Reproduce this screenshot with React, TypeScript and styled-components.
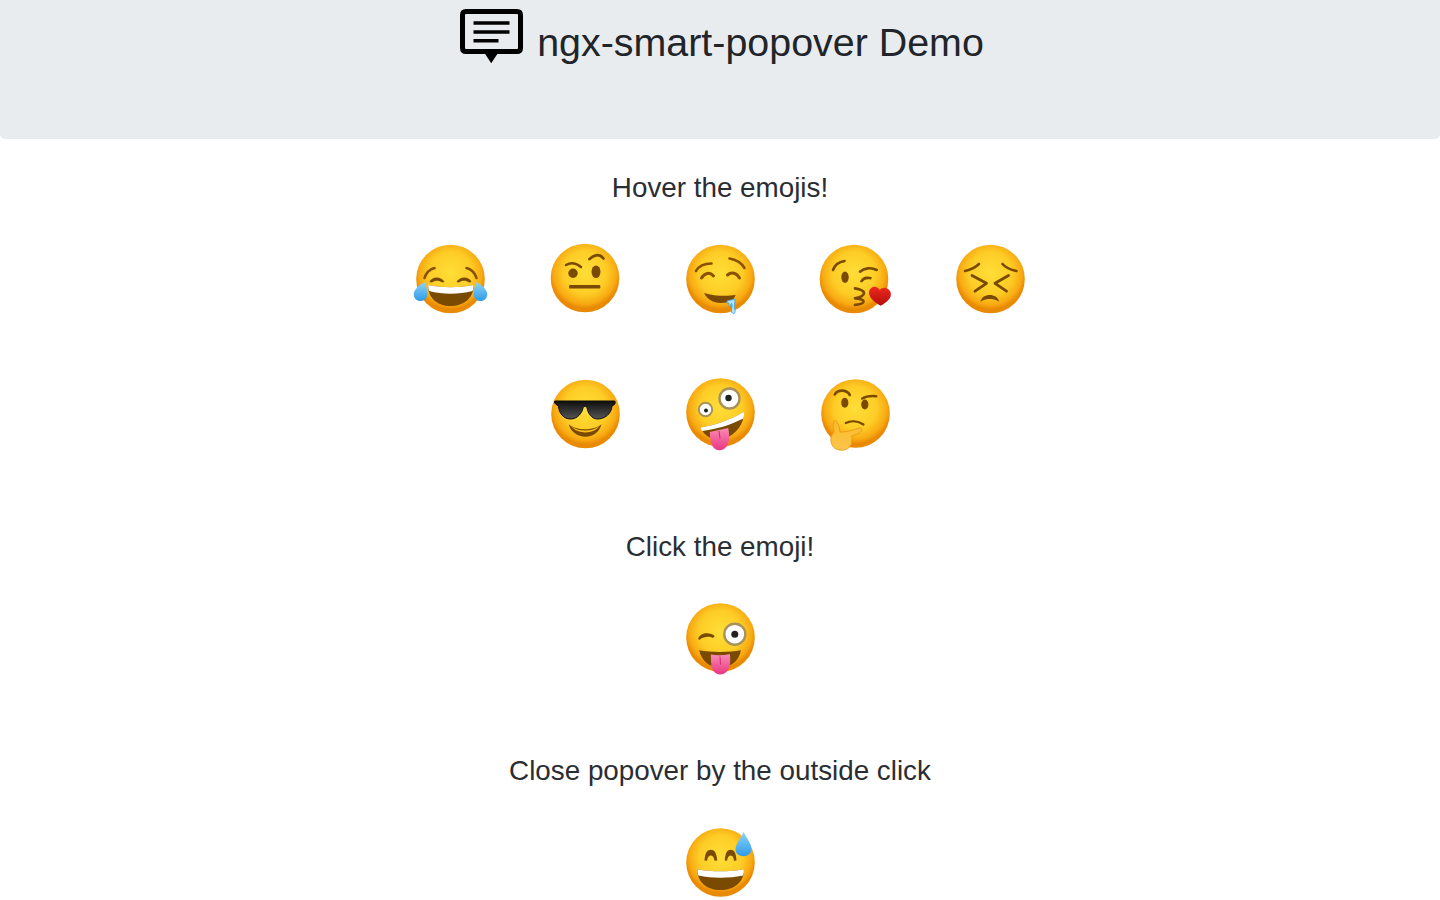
import React from "react";
import styled, { createGlobalStyle } from "styled-components";

const Global = createGlobalStyle`
  html, body { margin: 0; padding: 0; background: #fff; }
  body { font-family: "Liberation Sans", Arial, sans-serif; color: #212529; overflow: hidden; height: 900px; }
`;
const Page = styled.div`display: flex; flex-direction: column; align-items: center; height: 900px; overflow: hidden;`;
const Jumbotron = styled.header`
  align-self: stretch; flex: none; height: 138.5px; background: #e9ecef; border-radius: 0 0 5px 5px;
  display: flex; justify-content: center; align-items: flex-start; padding-left: 4px; box-sizing: border-box; margin-bottom: 30.5px;
`;
const Title = styled.h1`
  margin: 18px 0 0 13px; font-size: 39.4px; line-height: 48px; font-weight: 500; color: #212529; white-space: nowrap;
`;
const LogoSvg = styled.svg`display: block; margin-top: 9px; flex: none;`;
const Lead = styled.p<{ $after?: number }>`
  margin: 0; font-size: 27.8px; font-weight: 300; line-height: 38px; text-align: center;
  height: 38px; margin-bottom: ${p => p.$after ?? 0}px; white-space: nowrap; color: #2a2e33;
`;
const EmojiGrid = styled.div`
  display: flex; flex-wrap: wrap; justify-content: center; width: 675px;
`;
const Cell = styled.div`width: 135px; height: 135px; display: flex; align-items: center; justify-content: center;`;
const Section = styled.section<{ $after: number }>`display: flex; flex: none; flex-direction: column; align-items: center; margin-bottom: ${p => p.$after}px;`;

const BROWN = "#7a4a00";
const DARK = "#8a5200";
const Svg = styled.svg`display: block; overflow: visible; flex: none;`;
const E: React.FC<{ dx?: number; dy?: number; children: React.ReactNode }> = ({ dx = 0, dy = 0, children }) => (
  <Svg width="72" height="72" viewBox="0 0 72 72" style={{ transform: `translate(${dx}px, ${dy}px)` }}>
    <circle cx="36" cy="36" r="34.300" fill="url(#face)" />
    {children}
  </Svg>
);

const Joy = () => (
  <E dx={0.5} dy={0}>
    <path d="M10 35C11.500 30 15 26.500 20 25" stroke={DARK} strokeWidth="2.600" fill="none" strokeLinecap="round" />
    <path d="M62 35C60.500 30 57 26.500 52 25" stroke={DARK} strokeWidth="2.600" fill="none" strokeLinecap="round" />
    <path d="M15 39C17 33 27 33 30 39L27.500 39.500C25 37 20 37 17.500 39.500Z" fill={BROWN} />
    <path d="M42 39C45 33 55 33 57 39L54.500 39.500C52 37 47 37 44.500 39.500Z" fill={BROWN} />
    <path d="M13.700 42C27 45 45 45 59 42C59.500 55 49 63 36 63C23 63 13.200 55 13.700 42Z" fill={BROWN} />
    <path d="M13.700 42C27 45 45 45 59 42C59 44.500 58.700 46.500 58 48C44 51.500 28 51.500 14.700 48C14 46.500 13.700 44.500 13.700 42Z" fill="#fff" />
    <path d="M11 39C11.500 44 12.800 47 12.800 51C12.800 55.500 9.500 58 6 58C2.500 58 -0.800 55.500 -0.800 51C-0.800 47 5 41 11 39Z" fill="url(#tear)" />
    <path d="M61 39C60.500 44 59.200 47 59.200 51C59.200 55.500 62.500 58 66 58C69.500 58 72.800 55.500 72.800 51C72.800 47 67 41 61 39Z" fill="url(#tear)" />
  </E>
);
const Raised = () => (
  <E dx={0} dy={-1}>
    <path d="M17 23C22 20 27 21 32 25" stroke={BROWN} strokeWidth="2.600" fill="none" strokeLinecap="round" />
    <path d="M40.500 17C44 14 50 10.500 54.500 16.500" stroke={BROWN} strokeWidth="2.800" fill="none" strokeLinecap="round" />
    <circle cx="24" cy="31.300" r="4.700" fill={BROWN} />
    <ellipse cx="47" cy="29.700" rx="4.500" ry="6.300" fill={BROWN} />
    <rect x="20" y="43" width="31.300" height="3.600" rx="1.200" fill={BROWN} />
  </E>
);
const Drool = () => (
  <E dx={0.5} dy={0}>
    <path d="M11.500 28C14 23.500 20 20.500 27 20.500" stroke={DARK} strokeWidth="2.600" fill="none" strokeLinecap="round" />
    <path d="M60 25C57 20 51 16.500 45 15.500" stroke={DARK} strokeWidth="2.600" fill="none" strokeLinecap="round" />
    <path d="M17 35C20 30 25 28.500 29 33" stroke={DARK} strokeWidth="3" fill="none" strokeLinecap="round" />
    <path d="M43 32C47 28.500 52 30 55 35" stroke={DARK} strokeWidth="3" fill="none" strokeLinecap="round" />
    <path d="M19.700 50C29 53 42 53.500 51 52C50 57 44 60 36 60C29 60 22 56 19.700 50Z" fill={BROWN} />
    <path d="M42.500 58C44.500 57 48 57 50.500 56C50.500 60 49.500 63 50 65.500C51 67.500 51 70 49.200 70.500C47 70.500 46.800 68.500 47.200 66C47.500 63.500 47.700 61 47.200 60.500C46.200 60.500 46 62 45.800 64C44.500 64 44.300 61.500 44.500 60L42.500 60Z" fill="#b6e3f8" stroke="#3aa5e8" strokeWidth=".9" />
  </E>
);
const Kiss = () => (
  <E dx={-1} dy={0}>
    <path d="M15 27C16.500 22.500 20 19 26.500 18" stroke={BROWN} strokeWidth="2.600" fill="none" strokeLinecap="round" />
    <ellipse cx="27" cy="34.300" rx="3.700" ry="5.700" fill={BROWN} />
    <path d="M42 28.700C46 25 53 24 58.700 27" stroke={BROWN} strokeWidth="2.600" fill="none" strokeLinecap="round" />
    <path d="M42 39C43 34 49 32 54 34.500L53 36.500C49 35.500 46 36.500 44 39.500Z" fill={BROWN} />
    <path d="M37 45.300C41 46 46 47.500 46 50C46 52.500 41 54.500 37 55.300C41 55.500 45.500 56.500 45.500 58.500C45.500 60.500 41 61.500 37 61.800" stroke={BROWN} strokeWidth="2.700" fill="none" strokeLinecap="round" strokeLinejoin="round" />
    <path d="M62.500 62.700C55 58.500 51 54 51 49.500C51 46 54 43.500 57 43.700C59.500 44 61 45.500 61.800 47C63 45.500 65.500 44.500 68 45C71.500 46 73.500 49.500 72.800 52.500C72 56.500 68 60 62.500 62.700Z" fill="url(#heart)" />
  </E>
);
const Persevere = () => (
  <E dx={0.5} dy={0}>
    <path d="M10.500 28C15 27 21 24.500 24.500 21" stroke={BROWN} strokeWidth="2.600" fill="none" strokeLinecap="round" />
    <path d="M62 28C57 27 51 24.500 48 21" stroke={BROWN} strokeWidth="2.600" fill="none" strokeLinecap="round" />
    <path d="M17.500 32.500L32 40.300L20.500 48.200" stroke={BROWN} strokeWidth="2.800" fill="none" strokeLinecap="round" strokeLinejoin="round" />
    <path d="M54 32.500L40.500 40.300L52 48.200" stroke={BROWN} strokeWidth="2.800" fill="none" strokeLinecap="round" strokeLinejoin="round" />
    <path d="M26 58.700C27 54 31 52 35.300 52C39.500 52 43.500 54 44.700 58.700C41 56.500 38 56 35.300 56C32.500 56 29.500 56.500 26 58.700Z" fill={BROWN} />
  </E>
);
const Cool = () => (
  <E dx={0.5} dy={0}>
    <path d="M5.500 23H65C66 23 66 25 65 26.500L62.500 28C62 36 55 41 48 41C42 41 38.500 35 37.500 30C37 28 34 28 33.500 30C32.500 35 28 41 21 41C14 41 9.500 35 8.800 28L6 26C5 25 4.500 23 5.500 23Z" fill="url(#shades)" stroke="#0c0c0c" strokeWidth="1" />
    <path d="M19.300 46.300C27 53 44 53 52 46.300C50 54 44 58.700 36 58.700C28 58.700 21 54 19.300 46.300Z" fill={BROWN} />
    <path d="M21.500 48C29 54 42 54 50 48C44 56.500 28 56.500 21.500 48Z" fill="#f9bd22" />
  </E>
);
const Zany = () => (
  <E dx={0.5} dy={-1.5}>
    <circle cx="45" cy="22" r="10" fill="#fff" stroke="#a8925c" strokeWidth="2.400" />
    <circle cx="44" cy="21.500" r="3.200" fill="#222" />
    <circle cx="21" cy="33" r="6.700" fill="#fff" stroke="#a8925c" strokeWidth="2" />
    <circle cx="21.500" cy="34" r="2" fill="#222" />
    <path d="M16 51C30 49 47 43 59.300 35.300C60 47 52 58 40 62C29 65 20 60 16 51Z" fill={BROWN} />
    <path d="M16 51C30 49 47 43 59.300 35.300C59.800 37.500 59.500 40 58.800 42C46 48.500 31 53 17.500 54.500C16.800 53.500 16.300 52.300 16 51Z" fill="#fff" />
    <path d="M25.300 55.500L43.700 51.500C44.500 55 45 60 44.500 63C44 68 41 73.700 35 73.700C29 73.700 26.500 68 26 63C25.500 60 25.300 58 25.300 55.500Z" fill="url(#tongue)" />
    <path d="M34.500 54.500L35.500 62" stroke="#d12b70" strokeWidth="1" fill="none" />
  </E>
);
const Think = () => (
  <E dx={0.5} dy={-0.5}>
    <path d="M15.300 17C18 12 27 11.500 30.300 17.500" stroke={BROWN} strokeWidth="2.600" fill="none" strokeLinecap="round" />
    <path d="M42.700 21C46 19 51 18.200 56.700 18.700" stroke={BROWN} strokeWidth="2.600" fill="none" strokeLinecap="round" />
    <ellipse cx="25.300" cy="25.300" rx="3.600" ry="5" fill={BROWN} />
    <ellipse cx="45.300" cy="27" rx="3.600" ry="5" fill={BROWN} />
    <path d="M26.300 45.500C31 43 38 43 44 47" stroke={BROWN} strokeWidth="2.200" fill="none" strokeLinecap="round" />
    <path d="M16 43C18 44 20 49 20.500 54.500C26 55 34 52 40 50.500C43 50 43 54 40 55.500C37 57 33 58 31.500 59C33 60 33 62 32 63C32.500 65 32 67 30.800 68C30 70.500 27 72.700 22 72.700C15 72.700 11.300 68 11.300 62C11.300 58 13.500 56.500 14.500 54C14 50 13 47 14 44C14.500 43 15.300 42.700 16 43Z" fill="url(#hand)" stroke="#e8940f" strokeWidth=".8" />
  </E>
);
const Wink = () => (
  <E dx={0.5} dy={-1.5}>
    <circle cx="50.300" cy="32.700" r="10.500" fill="#fff" stroke="#a8925c" strokeWidth="2.400" />
    <circle cx="50.300" cy="32.700" r="3.500" fill="#222" />
    <path d="M13.700 37C16 31 25 30 30.300 34.500L28.500 36.500C25 34.500 19 35 15.500 38C14.500 38.500 13.500 38 13.700 37Z" fill={BROWN} />
    <path d="M14.700 48.700C26 51 45 51 56.300 48.700C55.500 56 50 62 45 64L26 64C20 61 16 55 14.700 48.700Z" fill={BROWN} />
    <path d="M26.300 53C32 54 39 54 45.300 52.500C46 57 46 62 45 65C43.500 70 40 73 35.500 73C31 73 28 69 27 65C26.500 61 26.300 57 26.300 53Z" fill="url(#tongue)" />
    <path d="M35.500 55L36 63" stroke="#d12b70" strokeWidth="1" fill="none" />
  </E>
);
const Sweat = () => (
  <E dx={0.5} dy={-0.5}>
    <path d="M20 34C20.500 26 23 23.300 26.300 23.300C29.500 23.300 32.200 26 32.700 34L30 34.300C29.500 30.500 28 29 26.300 29C24.500 29 23 30.500 22.500 34.300Z" fill={BROWN} />
    <path d="M40.300 34C40.800 26 43 23.300 46.200 23.300C49.500 23.300 51.500 26 52 34L49.500 34.300C49 30.500 48 29 46.200 29C44.500 29 43 30.500 42.500 34.300Z" fill={BROWN} />
    <path d="M13 42.700C27 45.500 45 45.500 59.300 42.700C60 55 50 63.500 36 63.500C22 63.500 12.300 55 13 42.700Z" fill={BROWN} />
    <path d="M13 42.700C27 45.500 45 45.500 59.300 42.700C59.500 45 59.200 47 58.500 49C44 52 28 52 13.800 49C13.200 47 13 45 13 42.700Z" fill="#fff" />
    <path d="M59 5.300C58 10 51 17 51 23C51 27.500 55 29.700 59 29.700C63.500 29.700 67 27 67 22.500C67 17 61 10 59 5.300Z" fill="url(#tear)" />
  </E>
);

const row = [Joy, Raised, Drool, Kiss, Persevere, Cool, Zany, Think];

export default function App() {
  return (
    <Page>
      <Global />
      <svg width="0" height="0" style={{ position: "absolute" }} aria-hidden="true">
        <defs>
          <radialGradient id="face" cx="50%" cy="42%" r="52%">
            <stop offset="0" stopColor="#ffde37" />
            <stop offset="0.6" stopColor="#fdcd26" />
            <stop offset="0.88" stopColor="#f8a912" />
            <stop offset="1" stopColor="#e98a05" />
          </radialGradient>
          <linearGradient id="tear" x1="0" y1="0" x2="0" y2="1">
            <stop offset="0" stopColor="#8ed4f8" />
            <stop offset="1" stopColor="#2e9be8" />
          </linearGradient>
          <linearGradient id="heart" x1="0" y1="0" x2="0" y2="1">
            <stop offset="0" stopColor="#ee2a1f" />
            <stop offset="1" stopColor="#b40d0d" />
          </linearGradient>
          <linearGradient id="tongue" x1="0" y1="0" x2="0" y2="1">
            <stop offset="0" stopColor="#f88cb5" />
            <stop offset="1" stopColor="#ea3583" />
          </linearGradient>
          <linearGradient id="hand" x1="0" y1="0" x2="0" y2="1">
            <stop offset="0" stopColor="#fbb92a" />
            <stop offset="1" stopColor="#fcc64a" />
          </linearGradient>
          <linearGradient id="shades" x1="0" y1="0" x2="0" y2="1">
            <stop offset="0" stopColor="#0e0e0e" />
            <stop offset="1" stopColor="#555" />
          </linearGradient>
        </defs>
      </svg>
      <Jumbotron>
        <LogoSvg width="64" height="56" viewBox="0 0 64 56">
          <path d="M6 2.500H57C59.500 2.500 60.500 3.500 60.500 6V39C60.500 41.500 59.500 42.500 57 42.500H6C3.500 42.500 2.500 41.500 2.500 39V6C2.500 3.500 3.500 2.500 6 2.500Z" fill="none" stroke="#000" strokeWidth="5" strokeLinejoin="round" />
          <path d="M24.500 44H38L31.200 54.300Z" fill="#000" />
          <path d="M13.500 14H49.500M13.500 23H49.500M13.500 31.700H38.500" stroke="#000" strokeWidth="3.600" fill="none" />
        </LogoSvg>
        <Title>ngx-smart-popover Demo</Title>
      </Jumbotron>
      <Section $after={47}>
        <Lead $after={4}>Hover the emojis!</Lead>
        <EmojiGrid>
          {row.map((C, i) => <Cell key={i}><C /></Cell>)}
        </EmojiGrid>
      </Section>
      <Section $after={46}>
        <Lead $after={5}>Click the emoji!</Lead>
        <EmojiGrid><Cell><Wink /></Cell></EmojiGrid>
      </Section>
      <Section $after={0}>
        <Lead $after={5}>Close popover by the outside click</Lead>
        <EmojiGrid><Cell><Sweat /></Cell></EmojiGrid>
      </Section>
    </Page>
  );
}
